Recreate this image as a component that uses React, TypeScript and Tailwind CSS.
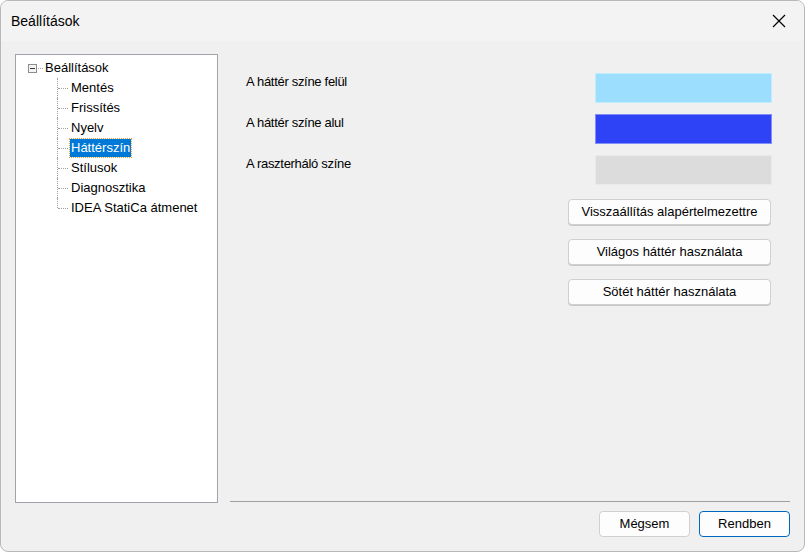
import React from 'react';

const treeChildren = ['Mentés', 'Frissítés', 'Nyelv', 'Háttérszín', 'Stílusok', 'Diagnosztika', 'IDEA StatiCa átmenet'];

const colorRows = [
  { label: 'A háttér színe felül', color: 'bg-[#9cdefe]' },
  { label: 'A háttér színe alul', color: 'bg-[#2e43f6]' },
  { label: 'A raszterháló színe', color: 'bg-[#dcdcdc]' },
];

const actions = ['Visszaállítás alapértelmezettre', 'Világos háttér használata', 'Sötét háttér használata'];

const TreeItem: React.FC<{ label: string; selected?: boolean; last?: boolean }> = ({ label, selected, last }) => (
  <div className="relative flex h-5 items-center pl-[42px]">
    {/* vertical dotted connector */}
    <div className={`absolute left-[41px] top-0 border-l border-dotted border-[#a0a0a0] ${last ? 'h-[10px]' : 'h-5'}`} />
    <div className="mr-[2px] w-[10px] border-t border-dotted border-[#a0a0a0]" />
    <span
      className={`px-[1px] leading-[18px] ${selected ? 'bg-[#0078d7] text-white outline outline-1 outline-dotted outline-[#e3a040]' : 'text-black'}`}
    >
      {label}
    </span>
  </div>
);

const App: React.FC = () => {
  return (
    <div className="h-[552px] w-[805px] bg-white font-['Segoe_UI','Liberation_Sans',sans-serif] text-[13px]">
      <div className="flex h-full flex-col overflow-hidden rounded-lg border border-[#b8b8b8] bg-[#f0f0f0]">
        {/* title bar */}
        <div className="flex h-[40px] shrink-0 items-center justify-between bg-[#f3f3f3] pl-[10px] pr-[18px]">
          <span className="text-[14px] text-black">Beállítások</span>
          <svg width="14" height="14" viewBox="0 0 14 14" className="text-black">
            <path d="M1 1L13 13M13 1L1 13" stroke="currentColor" strokeWidth="1.2" />
          </svg>
        </div>

        <div className="flex flex-1 gap-[13px] pl-[14px] pr-[14px] pt-[13px]">
          {/* tree */}
          <div className="h-[449px] w-[203px] shrink-0 border border-[#a0a4aa] bg-white pt-[3px]">
            <div className="flex h-5 items-center pl-[12px]">
              <div className="flex h-[9px] w-[9px] items-center justify-center border border-[#8d8d8d] bg-[#f4f4f4]">
                <div className="h-px w-[5px] bg-[#3a3a3a]" />
              </div>
              <div className="ml-px mr-[2px] w-[5px] border-t border-dotted border-[#a0a0a0]" />
              <span className="leading-[18px]">Beállítások</span>
            </div>
            {treeChildren.map((c, i) => (
              <TreeItem key={c} label={c} selected={c === 'Háttérszín'} last={i === treeChildren.length - 1} />
            ))}
          </div>

          {/* right side */}
          <div className="flex flex-1 flex-col">
            <div className="flex h-[447px] flex-col pl-[15px] pr-[18px] pt-[19px]">
              <div className="flex flex-col gap-[11px]">
                {colorRows.map((r) => (
                  <div key={r.label} className="flex h-[30px] items-center justify-between">
                    <span className="-mt-[12px] tracking-[-0.3px] text-black">{r.label}</span>
                    <div className={`h-[30px] w-[177px] border border-white/40 ${r.color}`} />
                  </div>
                ))}
              </div>
              <div className="mt-[14px] flex flex-col items-end gap-[14px] pr-[1px]">
                {actions.map((a) => (
                  <button
                    key={a}
                    className="h-[26px] w-[203px] rounded-[4px] border border-[#d0d0d0] bg-[#fdfdfd] text-[13px] text-black shadow-[0_1px_0_#c8c8c8]"
                  >
                    {a}
                  </button>
                ))}
              </div>
            </div>
            <div className="-ml-px border-t border-[#a0a0a0]" />
            <div className="flex justify-end gap-[9px] pt-[9px]">
              <button className="h-[26px] w-[91px] rounded-[4px] border border-[#d0d0d0] bg-[#fdfdfd] text-black">Mégsem</button>
              <button className="h-[26px] w-[91px] rounded-[4px] border border-[#0067c0] bg-[#fdfdfd] text-black">Rendben</button>
            </div>
          </div>
        </div>
      </div>
    </div>
  );
};

export default App;
